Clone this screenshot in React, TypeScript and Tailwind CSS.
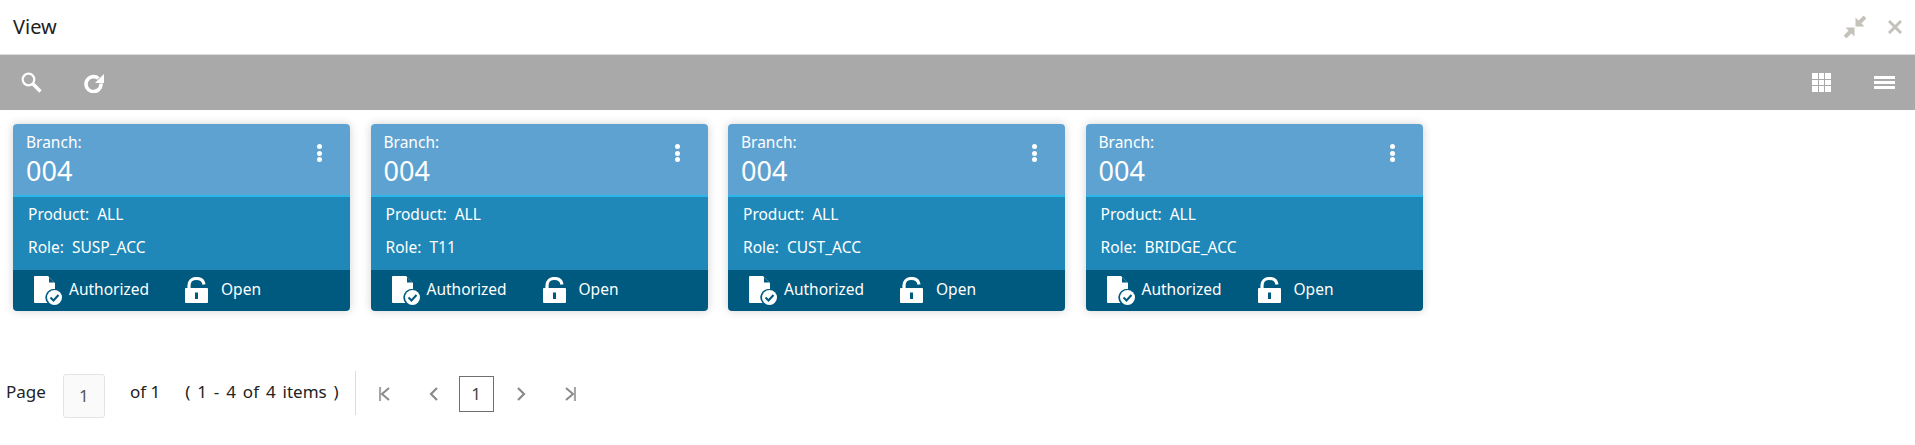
const cards = [
  { role: "SUSP_ACC" },
  { role: "T11" },
  { role: "CUST_ACC" },
  { role: "BRIDGE_ACC" },
];

function DocCheckIcon() {
  return (
    <svg width="28" height="29" viewBox="0 0 28 29" className="shrink-0">
      <path d="M0 1a1 1 0 0 1 1-1h13l7 7v6a8.500 8.500 0 0 0-7.500 14H1a1 1 0 0 1-1-1z" fill="#fff" />
      <path d="M15 1l5.500 5.500H15z" fill="#005a80" />
      <circle cx="20.500" cy="21.500" r="7.500" fill="#fff" />
      <path d="M16.500 21.500l3 3 5-5.500" fill="none" stroke="#005a80" strokeWidth="2" />
    </svg>
  );
}

function LockOpenIcon() {
  return (
    <svg width="23" height="26" viewBox="0 0 23 26" className="shrink-0">
      <path d="M4 12V8.500C4 4 7 1.500 11.500 1.500c4 0 7 2 7.500 6" fill="none" stroke="#fff" strokeWidth="3.200" />
      <path d="M0 12a1 1 0 0 1 1-1h21a1 1 0 0 1 1 1v13a1 1 0 0 1-1 1H1a1 1 0 0 1-1-1z" fill="#fff" />
      <rect x="10" y="15.500" width="3" height="6.500" fill="#005a80" />
    </svg>
  );
}

function Chevron({ dir }: { dir: "left" | "right" }) {
  return (
    <svg width="9" height="14" viewBox="0 0 9 14" fill="none" stroke="#8a8a8a" strokeWidth="2.200" className="shrink-0">
      <path d={dir === "left" ? "M8 1L2 7l6 6" : "M1 1l6 6-6 6"} />
    </svg>
  );
}

function EdgeChevron({ dir }: { dir: "first" | "last" }) {
  return (
    <svg width="11" height="14" viewBox="0 0 11 14" fill="none" className="shrink-0">
      <path d={dir === "first" ? "M1 0v14" : "M10 0v14"} stroke="#a6a6a6" strokeWidth="2.200" />
      <path d={dir === "first" ? "M10 1L3 7l7 6" : "M1 1l7 6-7 6"} stroke="#8a8a8a" strokeWidth="2" />
    </svg>
  );
}

function Card({ role }: { role: string }) {
  return (
    <div className="w-[337px] rounded-[4px] overflow-hidden shadow-[0_0_10px_rgba(0,0,0,0.18)] text-white">
      <div className="h-[71px] bg-[#5ea2d1] pl-[13px] pr-[28px] flex justify-between">
        <div>
          <div className="text-[15.500px] leading-[20px] mt-[8px]">Branch:</div>
          <div className="text-[27px] leading-[34px] mt-[2px]">004</div>
        </div>
        <div className="flex flex-col gap-[1.500px] mt-[20px]">
          <span className="w-[5px] h-[5px] rounded-full bg-white" />
          <span className="w-[5px] h-[5px] rounded-full bg-white" />
          <span className="w-[5px] h-[5px] rounded-full bg-white" />
        </div>
      </div>
      <div className="h-[75px] bg-[#1f88b8] border-t-2 border-[#29b6e8] pl-[15px] text-[15.500px] leading-[20px]">
        <div className="mt-[7px] h-[33px]">Product:&nbsp; ALL</div>
        <div>Role:&nbsp; {role}</div>
      </div>
      <div className="h-[41px] bg-[#005a80] flex items-center text-[15.500px] pl-[21px]">
        <div className="w-[151px] flex items-center gap-[7px]">
          <DocCheckIcon />
          <span className="-mt-[2px]">Authorized</span>
        </div>
        <div className="flex items-center gap-[13px] -mt-[2px]">
          <LockOpenIcon />
          <span>Open</span>
        </div>
      </div>
    </div>
  );
}

export default function App() {
  return (
    <div className="w-[1915px] h-[445px] bg-white overflow-hidden font-['Noto_Sans',sans-serif] text-[#222]">
      <div className="h-[55px] border-b border-[#d8dcdc] flex items-center justify-between pl-[13px] pr-[13px]">
        <span className="text-[20px]">View</span>
        <div className="flex items-center gap-[22px]">
          <svg width="22" height="22" viewBox="0 0 22 22" fill="#c4c2ba">
            <path d="M11.500 1.500v9h9z" />
            <path d="M15 7l6-6" stroke="#c4c2ba" strokeWidth="4" />
            <path d="M10.500 11.500h-9l9 9z" />
            <path d="M7 15l-6 6" stroke="#c4c2ba" strokeWidth="4" />
          </svg>
          <svg width="14" height="14" viewBox="0 0 14 14" stroke="#c4c2ba" strokeWidth="3" fill="none">
            <path d="M1 1l12 12M13 1L1 13" />
          </svg>
        </div>
      </div>
      <div className="h-[55px] bg-[#a9a9a9] flex items-center justify-between pl-[21px] pr-[20px]">
        <div className="flex items-center gap-[41px]">
          <svg width="21" height="21" viewBox="0 0 21 21" fill="none" stroke="#fff">
            <circle cx="7.500" cy="7.500" r="5.800" strokeWidth="2.200" />
            <path d="M12 12l7.500 7.500" strokeWidth="3.400" />
          </svg>
          <svg width="21" height="20" viewBox="0 0 21 20" fill="none">
            <path d="M15.500 5.500a7.500 7.500 0 1 0 2.500 5" stroke="#fff" strokeWidth="3.600" />
            <path d="M21 1v9h-9z" fill="#fff" />
          </svg>
        </div>
        <div className="flex items-center gap-[43px]">
          <div className="grid grid-cols-3 gap-[1px] w-[19px]">
            {Array.from({ length: 9 }).map((_, i) => (
              <span key={i} className="h-[5.500px] bg-white" />
            ))}
          </div>
          <div className="flex flex-col gap-[2px] w-[21px]">
            <span className="h-[3px] bg-white" />
            <span className="h-[3px] bg-white" />
            <span className="h-[3px] bg-white" />
          </div>
        </div>
      </div>
      <div className="flex gap-[20.500px] pl-[13px] pt-[14px]">
        {cards.map((c, i) => (
          <Card key={i} role={c.role} />
        ))}
      </div>
      <div className="flex items-center mt-[63px] pl-[6px] text-[17px] text-[#222] h-[44px]">
        <span className="-mt-[8px]">Page</span>
        <div className="ml-[17px] w-[42px] h-[44px] border border-[#e4e4e4] rounded-[3px] bg-[#fafafa] flex items-center justify-center text-[#555]">
          1
        </div>
        <span className="ml-[25px] -mt-[8px]">of 1</span>
        <span className="ml-[25px] -mt-[8px] [word-spacing:2.500px]">( 1 - 4 of 4 items )</span>
        <div className="ml-[16px] w-px h-[44px] -mt-[6px] bg-[#dcdcdc]" />
        <div className="ml-[23px] -mt-[5px] flex items-center">
          <EdgeChevron dir="first" />
        </div>
        <div className="ml-[39px] -mt-[5px] flex items-center">
          <Chevron dir="left" />
        </div>
        <div className="ml-[21px] -mt-[5px] w-[35px] h-[36px] border border-[#6f6f6f] flex items-center justify-center text-[#444]">1</div>
        <div className="ml-[23px] -mt-[5px] flex items-center">
          <Chevron dir="right" />
        </div>
        <div className="ml-[39px] -mt-[5px] flex items-center">
          <EdgeChevron dir="last" />
        </div>
      </div>
    </div>
  );
}
